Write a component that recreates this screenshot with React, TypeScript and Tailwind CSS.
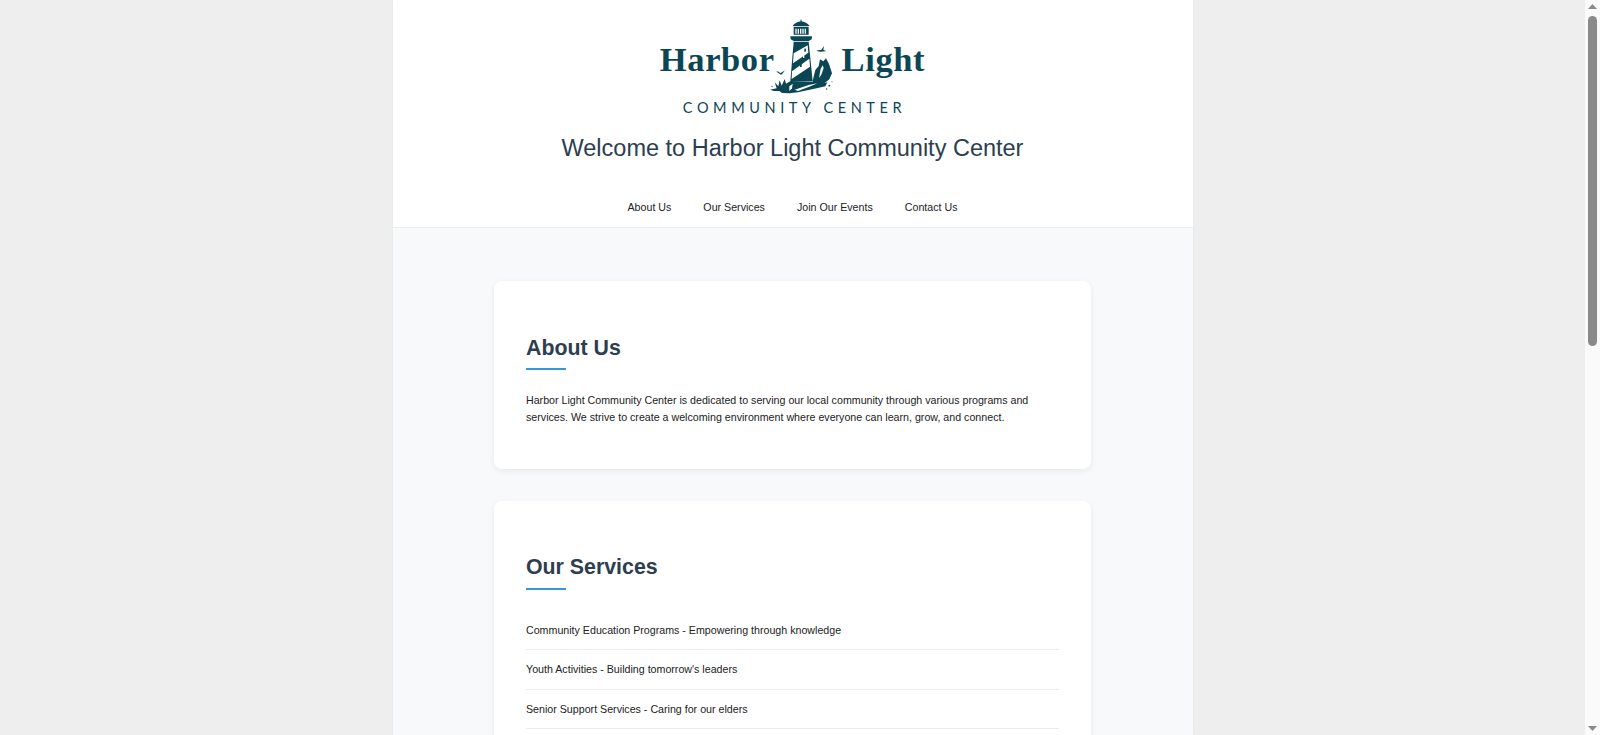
import React from "react";

const teal = "#0b4655";

function Lighthouse() {
  return (
    <svg viewBox="0 0 240 270" className="w-[80px] h-[90px] shrink-0 -ml-[5px] -mr-[8px]" fill={teal}>
      {/* finial and dome */}
      <rect x="91.5" y="29" width="3" height="7" />
      <path d="M68 48 C72 41 84 35 93 34 C103 35 114 41 119 48 Z" />
      {/* lantern */}
      <path fillRule="evenodd" d="M71 50H116V74H71Z M76 56V71H80V56Z M83 56V71H87V56Z M90 56V71H94V56Z M97 56V71H101V56Z M104 56V71H108V56Z" />
      {/* gallery */}
      <path d="M61 79 H126 L125 88 L116 93 H71 L62 88 Z" />
      {/* tower */}
      <path d="M71 95 H116 L128 214 L61 214 Z" />
      {/* white spiral stripes */}
      <path fill="#fff" d="M71 130 L113 106 L115 128 L69 160 Z" />
      <path fill="#fff" d="M66 184 L118 146 L120 170 L65 207 Z" />
      {/* windows */}
      <rect x="103" y="116" width="5" height="9" fill={teal} transform="rotate(8 105 120)" />
      <rect x="90" y="162" width="5" height="9" fill={teal} />
      <rect x="99" y="136" width="4" height="8" fill="#fff" />
      {/* rock */}
      <path d="M128 212 L136 180 L146 168 L150 148 L160 154 L168 145 L177 162 L186 190 L178 208 L150 230 L128 232 Z" />
      <path fill="#fff" d="M152 176 L158 166 L161 174 L154 194 L147 204 Z" />
      {/* birds */}
      <path d="M139 122 C146 121 149 119 153 121 L162 108 L160 120 C163 120 166 122 168 124 C162 123 158 125 152 125 C148 125 143 124 139 122 Z" />
      <path d="M19 185 C24 184 28 186 31 190 L45 181 L36 193 L32 194 C28 190 24 187 19 185 Z" />
      {/* splash and water */}
      <g transform="translate(0 7)">
        <path d="M0 232 L20 228 L14 210 L25 222 L29 204 L35 220 L44 200 L48 214 L62 206 L128 208 L140 218 L172 210 L166 222 L140 228 L112 234 L84 240 L58 243 L36 242 L28 236 L12 236 Z" />
        <path fill="#fff" d="M74 232 L116 218 L142 213 L116 224 L84 236 Z" />
        <path fill="#fff" d="M58 222 L68 214 L66 228 L58 236 Z" />
        <circle cx="6" cy="222" r="1.8" />
        <circle cx="178" cy="220" r="2.5" />
        <circle cx="186" cy="208" r="1.6" />
        <circle cx="170" cy="230" r="2" />
      </g>
    </svg>
  );
}

function Logo() {
  return (
    <div className="flex flex-col items-center h-[125px] pt-[10px]">
      <div className="flex items-end h-[90px]">
        <span className="[font-family:'Liberation_Serif',serif] font-bold text-[34.5px] leading-[37px] tracking-[0.6px] mb-[22px] text-[#0b4655]">Harbor</span>
        <Lighthouse />
        <span className="[font-family:'Liberation_Serif',serif] font-bold text-[34.5px] leading-[37px] tracking-[0.6px] mb-[22px] text-[#0b4655]">Light</span>
      </div>
      <div className="[font-family:Lato,sans-serif] text-[14.5px] leading-[16px] tracking-[4.6px] ml-[4px] text-[#0b4655]">COMMUNITY CENTER</div>
    </div>
  );
}

export default function App() {
  const nav = ["About Us", "Our Services", "Join Our Events", "Contact Us"];
  const services = [
    "Community Education Programs - Empowering through knowledge",
    "Youth Activities - Building tomorrow's leaders",
    "Senior Support Services - Caring for our elders",
  ];
  return (
    <div className="flex h-screen overflow-hidden bg-[#eeeeee] [font-family:'Liberation_Sans',Arial,sans-serif] text-[#222222]">
      <div className="flex-1 min-w-0 overflow-hidden">
        <div className="w-[800px] h-full mx-auto flex flex-col bg-[#f8f9fa] shadow-[0_0_3px_rgba(0,0,0,0.04)]">
          <header className="bg-white border-b border-[#ececec] h-[228px] shrink-0 flex flex-col items-center">
            <Logo />
            <h1 className="text-[23.5px] leading-[30px] font-normal text-[#2c3e50] mt-[8px]">
              Welcome to Harbor Light Community Center
            </h1>
            <nav className="flex gap-[32px] mt-[36px] text-[10.67px] leading-[16px]">
              {nav.map((n) => (
                <a key={n}>{n}</a>
              ))}
            </nav>
          </header>
          <main className="flex-1 min-h-0 flex flex-col gap-[32px] px-[101.5px] pt-[53px]">
            <section className="bg-white rounded-[8px] shadow-[0_2px_6px_rgba(0,0,0,0.07)] px-[32px] pt-[53px] h-[188px] shrink-0">
              <h2 className="text-[21.33px] leading-[28px] font-bold text-[#2c3e50]">About Us</h2>
              <div className="w-[40px] h-[2px] bg-[#3498db] mt-[6px] mb-[22px]" />
              <p className="text-[10.67px] leading-[16.5px]">
                Harbor Light Community Center is dedicated to serving our local community through various programs and services. We strive to create a welcoming environment where everyone can learn, grow, and connect.
              </p>
            </section>
            <section className="bg-white rounded-[8px] shadow-[0_2px_6px_rgba(0,0,0,0.07)] px-[32px] pt-[52px] flex-1 min-h-[300px] shrink-0">
              <h2 className="text-[21.33px] leading-[28px] font-bold text-[#2c3e50]">Our Services</h2>
              <div className="w-[40px] h-[2px] bg-[#3498db] mt-[7px] mb-[21px]" />
              <ul className="text-[10.67px] leading-[16px]">
                {services.map((s) => (
                  <li key={s} className="py-[11.17px] border-b border-[#ececec]">{s}</li>
                ))}
              </ul>
            </section>
          </main>
        </div>
      </div>
      <div className="w-[15px] shrink-0 bg-[#fafafa] flex flex-col items-center">
        <svg viewBox="0 0 9 5" className="w-[9px] h-[5px] mt-[4px] shrink-0" fill="#8a8a8a"><path d="M4.5 0 9 5H0Z" /></svg>
        <div className="w-[9px] h-[330px] mt-[7px] shrink-0 rounded-t-[5px] rounded-b-[5px] bg-[#8a8a8a]" />
        <div className="flex-1" />
        <svg viewBox="0 0 9 5" className="w-[9px] h-[5px] mb-[4px] shrink-0" fill="#8a8a8a"><path d="M0 0H9L4.5 5Z" /></svg>
      </div>
    </div>
  );
}
